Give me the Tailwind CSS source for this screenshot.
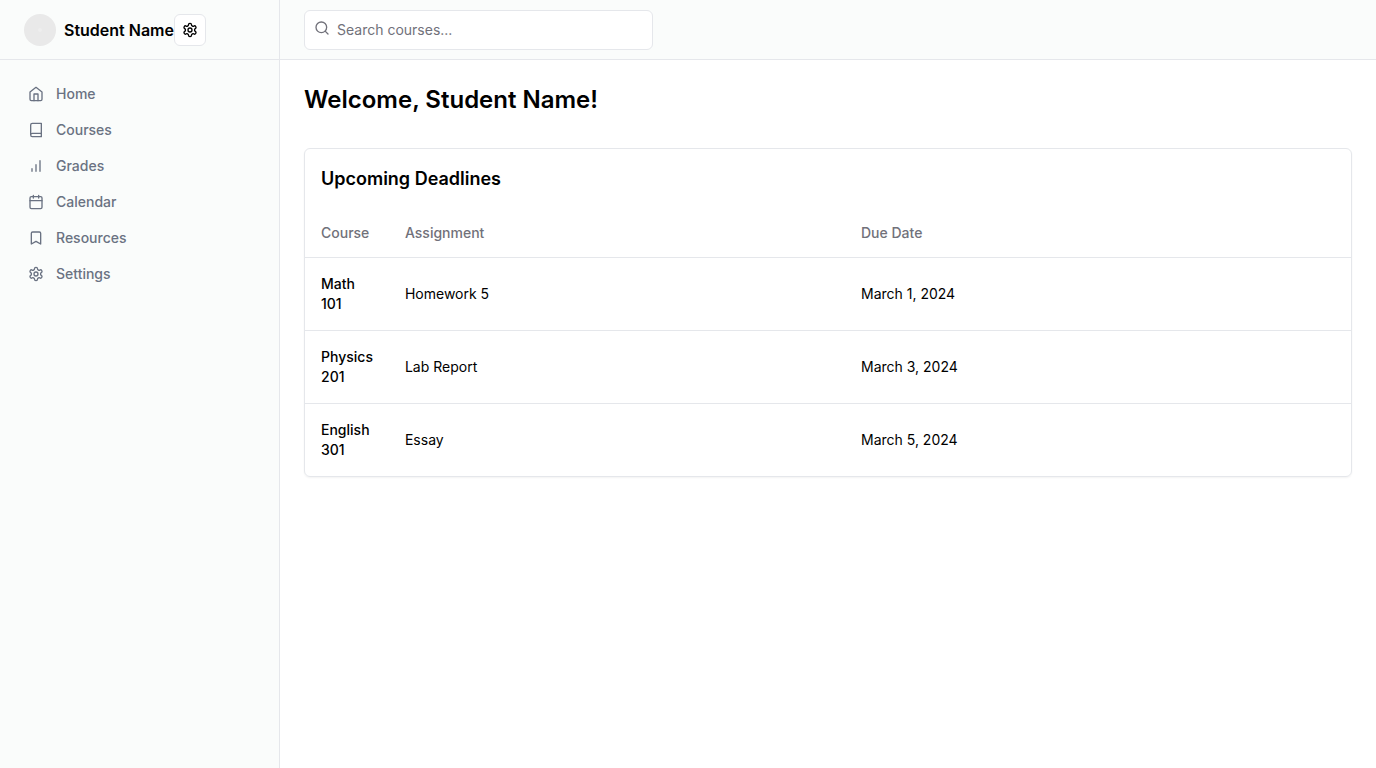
<!DOCTYPE html>
<html lang="en">
<head>
<meta charset="utf-8">
<meta name="viewport" content="width=device-width, initial-scale=1">
<title>Student Dashboard</title>
<script src="https://cdn.jsdelivr.net/npm/@tailwindcss/browser@4"></script>
</head>
<body class="bg-white font-['Inter',sans-serif] text-black">
<svg class="hidden" aria-hidden="true">
  <symbol id="gear" viewBox="0 0 24 24"><path d="M12.22 2h-.44a2 2 0 0 0-2 2v.18a2 2 0 0 1-1 1.73l-.43.25a2 2 0 0 1-2 0l-.15-.08a2 2 0 0 0-2.73.73l-.22.38a2 2 0 0 0 .73 2.73l.15.1a2 2 0 0 1 1 1.72v.51a2 2 0 0 1-1 1.74l-.15.09a2 2 0 0 0-.73 2.73l.22.38a2 2 0 0 0 2.73.73l.15-.08a2 2 0 0 1 2 0l.43.25a2 2 0 0 1 1 1.73V20a2 2 0 0 0 2 2h.44a2 2 0 0 0 2-2v-.18a2 2 0 0 1 1-1.73l.43-.25a2 2 0 0 1 2 0l.15.08a2 2 0 0 0 2.73-.73l.22-.39a2 2 0 0 0-.73-2.73l-.15-.08a2 2 0 0 1-1-1.74v-.5a2 2 0 0 1 1-1.74l.15-.09a2 2 0 0 0 .73-2.73l-.22-.38a2 2 0 0 0-2.73-.73l-.15.08a2 2 0 0 1-2 0l-.43-.25a2 2 0 0 1-1-1.73V4a2 2 0 0 0-2-2z"/><circle cx="12" cy="12" r="3"/></symbol>
</svg>
<div class="grid min-h-screen w-full grid-cols-[280px_1fr]">
  <aside class="border-r border-gray-200 bg-[#fafcfb]">
    <div class="flex h-[60px] items-center border-b border-gray-200 px-6">
      <a href="#" class="flex items-center gap-2 font-semibold">
        <span class="flex size-8 items-center justify-center rounded-full bg-[#e9e9e9]"><span class="size-1 rounded-full bg-[#eeeeee]"></span></span>
        <span>Student Name</span>
      </a>
      <button type="button" aria-label="Account settings" class="flex size-8 items-center justify-center rounded-md border border-gray-200 bg-white">
        <svg class="size-4 fill-none stroke-current stroke-2" stroke-linecap="round" stroke-linejoin="round"><use href="#gear"/></svg>
      </button>
    </div>
    <nav class="flex flex-col px-4 py-4 text-sm font-medium text-gray-500">
      <a href="#" class="flex items-center gap-3 rounded-lg px-3 py-2"><svg class="size-4 fill-none stroke-current stroke-2" viewBox="0 0 24 24" stroke-linecap="round" stroke-linejoin="round"><path d="m3 9 9-7 9 7v11a2 2 0 0 1-2 2H5a2 2 0 0 1-2-2z"/><path d="M9 22V12h6v10"/></svg>Home</a>
      <a href="#" class="flex items-center gap-3 rounded-lg px-3 py-2"><svg class="size-4 fill-none stroke-current stroke-2" viewBox="0 0 24 24" stroke-linecap="round" stroke-linejoin="round"><path d="M4 19.5v-15A2.5 2.5 0 0 1 6.5 2H20v20H6.5a2.5 2.5 0 0 1 0-5H20"/></svg>Courses</a>
      <a href="#" class="flex items-center gap-3 rounded-lg px-3 py-2"><svg class="size-4 fill-none stroke-current stroke-2" viewBox="0 0 24 24" stroke-linecap="round" stroke-linejoin="round"><path d="M12 20V10M18 20V4M6 20v-4"/></svg>Grades</a>
      <a href="#" class="flex items-center gap-3 rounded-lg px-3 py-2"><svg class="size-4 fill-none stroke-current stroke-2" viewBox="0 0 24 24" stroke-linecap="round" stroke-linejoin="round"><rect width="18" height="18" x="3" y="4" rx="2"/><path d="M16 2v4M8 2v4M3 10h18"/></svg>Calendar</a>
      <a href="#" class="flex items-center gap-3 rounded-lg px-3 py-2"><svg class="size-4 fill-none stroke-current stroke-2" viewBox="0 0 24 24" stroke-linecap="round" stroke-linejoin="round"><path d="m19 21-7-4-7 4V5a2 2 0 0 1 2-2h10a2 2 0 0 1 2 2z"/></svg>Resources</a>
      <a href="#" class="flex items-center gap-3 rounded-lg px-3 py-2"><svg class="size-4 fill-none stroke-current stroke-2" stroke-linecap="round" stroke-linejoin="round"><use href="#gear"/></svg>Settings</a>
    </nav>
  </aside>
  <div class="flex min-w-0 flex-col">
    <header class="flex h-[60px] items-center border-b border-gray-200 bg-[#fafcfb] px-6">
      <form class="relative w-1/3">
        <svg class="absolute top-2.5 left-2.5 size-4 fill-none stroke-[#71717a] stroke-2" viewBox="0 0 24 24" stroke-linecap="round" stroke-linejoin="round"><circle cx="11" cy="11" r="8"/><path d="m21 21-4.3-4.3"/></svg>
        <input type="search" aria-label="Search courses" placeholder="Search courses..." class="h-10 w-full rounded-md border border-gray-200 bg-white pr-3 pl-8 text-sm placeholder:text-[#71717a]">
      </form>
    </header>
    <main class="flex flex-1 flex-col gap-8 p-6">
      <h1 class="text-2xl font-semibold">Welcome, Student Name!</h1>
      <section class="rounded-md border border-gray-200 shadow-xs">
        <h2 class="p-4 text-lg font-semibold">Upcoming Deadlines</h2>
        <table class="w-full text-left text-sm">
          <thead class="text-[#71717a]">
            <tr class="border-b border-gray-200">
              <th scope="col" class="h-12 w-[8%] px-4 font-medium">Course</th>
              <th scope="col" class="h-12 w-[43.6%] px-4 font-medium">Assignment</th>
              <th scope="col" class="h-12 px-4 font-medium">Due Date</th>
            </tr>
          </thead>
          <tbody class="divide-y divide-gray-200">
            <tr><td class="p-4 font-medium">Math 101</td><td class="p-4">Homework 5</td><td class="p-4">March 1, 2024</td></tr>
            <tr><td class="p-4 font-medium">Physics 201</td><td class="p-4">Lab Report</td><td class="p-4">March 3, 2024</td></tr>
            <tr><td class="p-4 font-medium">English 301</td><td class="p-4">Essay</td><td class="p-4">March 5, 2024</td></tr>
          </tbody>
        </table>
      </section>
    </main>
  </div>
</div>
</body>
</html>
